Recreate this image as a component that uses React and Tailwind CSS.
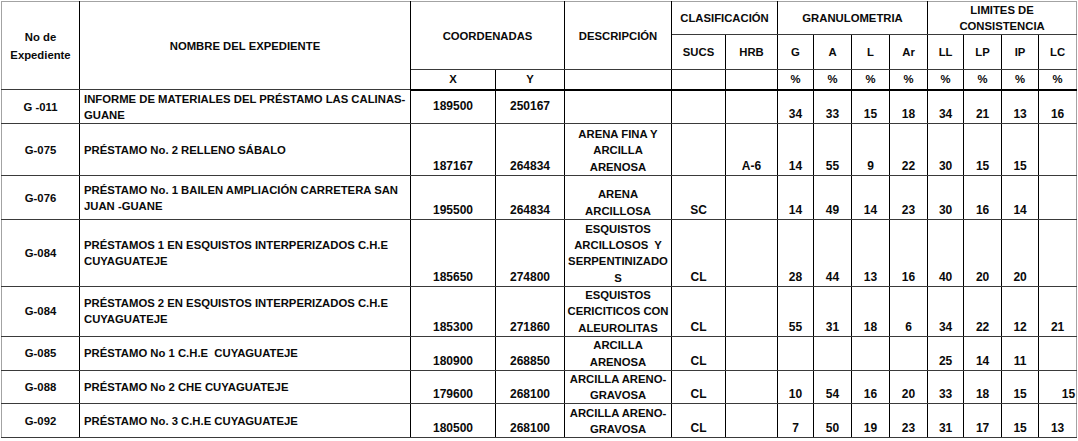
const rows = [
  {
    id: 'G -011',
    name: ['INFORME DE MATERIALES DEL PRÉSTAMO LAS CALINAS-', 'GUANE'],
    x: '189500', y: '250167', coordMid: true,
    desc: [], sucs: '', hrb: '',
    vals: ['34', '33', '15', '18', '34', '21', '13', '16'],
    h: 'h-[34px]',
  },
  {
    id: 'G-075',
    name: ['PRÉSTAMO No. 2 RELLENO SÁBALO'],
    x: '187167', y: '264834',
    desc: ['ARENA FINA Y', 'ARCILLA', 'ARENOSA'], sucs: '', hrb: 'A-6',
    vals: ['14', '55', '9', '22', '30', '15', '15', ''],
    h: 'h-[52px]',
  },
  {
    id: 'G-076',
    name: ['PRÉSTAMO No. 1 BAILEN AMPLIACIÓN CARRETERA SAN', 'JUAN -GUANE'],
    x: '195500', y: '264834',
    desc: ['ARENA', 'ARCILLOSA'], sucs: 'SC', hrb: '',
    vals: ['14', '49', '14', '23', '30', '16', '14', ''],
    h: 'h-[44px]',
  },
  {
    id: 'G-084',
    name: ['PRÉSTAMOS 1 EN ESQUISTOS INTERPERIZADOS C.H.E', 'CUYAGUATEJE'],
    x: '185650', y: '274800',
    desc: ['ESQUISTOS', 'ARCILLOSOS  Y', 'SERPENTINIZADO', 'S'], sucs: 'CL', hrb: '',
    vals: ['28', '44', '13', '16', '40', '20', '20', ''],
    h: 'h-[67px]',
  },
  {
    id: 'G-084',
    name: ['PRÉSTAMOS 2 EN ESQUISTOS INTERPERIZADOS C.H.E', 'CUYAGUATEJE'],
    x: '185300', y: '271860',
    desc: ['ESQUISTOS', 'CERICITICOS CON', 'ALEUROLITAS'], sucs: 'CL', hrb: '',
    vals: ['55', '31', '18', '6', '34', '22', '12', '21'],
    h: 'h-[49px]',
  },
  {
    id: 'G-085',
    name: ['PRÉSTAMO No 1 C.H.E  CUYAGUATEJE'],
    x: '180900', y: '268850',
    desc: ['ARCILLA', 'ARENOSA'], sucs: 'CL', hrb: '',
    vals: ['', '', '', '', '25', '14', '11', ''],
    h: 'h-[34px]',
  },
  {
    id: 'G-088',
    name: ['PRÉSTAMO No 2 CHE CUYAGUATEJE'],
    x: '179600', y: '268100',
    desc: ['ARCILLA ARENO-', 'GRAVOSA'], sucs: 'CL', hrb: '',
    vals: ['10', '54', '16', '20', '33', '18', '15', '15'], lcRight: true,
    h: 'h-[33px]',
  },
  {
    id: 'G-092',
    name: ['PRÉSTAMO No. 3 C.H.E CUYAGUATEJE'],
    x: '180500', y: '268100',
    desc: ['ARCILLA ARENO-', 'GRAVOSA'], sucs: 'CL', hrb: '',
    vals: ['7', '50', '19', '23', '31', '17', '15', '13'],
    h: 'h-[34px]',
  },
];

const widths = [
  'w-[78px]', 'w-[331px]', 'w-[85px]', 'w-[69px]', 'w-[107px]', 'w-[54px]', 'w-[52px]',
  'w-[36px]', 'w-[38px]', 'w-[38px]', 'w-[38px]', 'w-[36px]', 'w-[38px]', 'w-[37px]', 'w-[38px]',
];

// cell borders: black verticals, dark horizontals
const cell = 'border border-x-black border-y-[#3a3a3a] p-0';
const num = 'text-[12px] leading-[17px]';

function Lines({ lines }) {
  return lines.map((l, i) => (
    <span key={i} className="block whitespace-pre">{l}</span>
  ));
}

export default function App() {
  return (
    <div className="bg-white w-[1078px] h-[441px] pl-[1px] pt-[1px] font-['Liberation_Sans',Arial,sans-serif] font-bold text-[11.3px] text-[#0a0a0a]">
      <table className="table-fixed border-collapse w-[1075px]">
        <colgroup>
          {widths.map((w, i) => <col key={i} className={w} />)}
        </colgroup>
        <thead className="leading-[16px]">
          <tr className="h-[32px]">
            <th rowSpan={3} className={`${cell} border-l-[#a3a3a3] border-t-[#a3a3a3] font-bold leading-[18px] text-center align-middle`}>
              No de<br />Expediente
            </th>
            <th rowSpan={3} className={`${cell} border-t-[#a3a3a3] font-bold text-center align-middle`}>
              NOMBRE DEL EXPEDIENTE
            </th>
            <th colSpan={2} rowSpan={2} className={`${cell} border-t-[#a3a3a3] font-bold text-center align-middle`}>
              COORDENADAS
            </th>
            <th rowSpan={2} className={`${cell} border-t-[#a3a3a3] font-bold text-center align-middle`}>
              DESCRIPCIÓN
            </th>
            <th colSpan={2} className={`${cell} border-t-[#a3a3a3] font-bold text-center align-middle`}>
              CLASIFICACIÓN
            </th>
            <th colSpan={4} className={`${cell} border-t-[#a3a3a3] font-bold text-center align-middle`}>
              GRANULOMETRIA
            </th>
            <th colSpan={4} className={`${cell} border-t-[#a3a3a3] border-r-[#a3a3a3] font-bold text-center align-middle leading-[16px]`}>
              LIMITES DE<br />CONSISTENCIA
            </th>
          </tr>
          <tr className="h-[35px]">
            {['SUCS', 'HRB', 'G', 'A', 'L', 'Ar', 'LL', 'LP', 'IP'].map((t) => (
              <th key={t} className={`${cell} font-bold text-center align-middle`}>{t}</th>
            ))}
            <th className={`${cell} border-r-[#a3a3a3] font-bold text-center align-middle`}>LC</th>
          </tr>
          <tr className="h-[20px]">
            <th className={`${cell} border-b-2 border-b-black font-bold text-center align-middle`}>X</th>
            <th className={`${cell} border-b-2 border-b-black font-bold text-center align-middle`}>Y</th>
            <th className={`${cell} border-b-2 border-b-black`}></th>
            <th className={`${cell} border-b-2 border-b-black`}></th>
            <th className={`${cell} border-b-2 border-b-black`}></th>
            {[0, 1, 2, 3, 4, 5, 6].map((i) => (
              <th key={i} className={`${cell} border-b-2 border-b-black font-bold text-center align-middle`}>%</th>
            ))}
            <th className={`${cell} border-b-2 border-b-black border-r-[#a3a3a3] font-bold text-center align-middle`}>%</th>
          </tr>
        </thead>
        <tbody className="leading-[16px]">
          {rows.map((r, ri) => (
            <tr key={ri} className={r.h}>
              <td className={`${cell} border-l-[#a3a3a3] text-center align-middle`}>{r.id}</td>
              <td className={`${cell} pl-[4px] text-left align-middle`}>
                <Lines lines={r.name} />
              </td>
              <td className={`${cell} ${num} text-center ${r.coordMid ? 'align-middle' : 'align-bottom'}`}>{r.x}</td>
              <td className={`${cell} ${num} text-center ${r.coordMid ? 'align-middle' : 'align-bottom'}`}>{r.y}</td>
              <td className={`${cell} text-center align-bottom leading-[16.3px]`}>
                <Lines lines={r.desc} />
              </td>
              <td className={`${cell} ${num} text-center align-bottom`}>{r.sucs}</td>
              <td className={`${cell} ${num} text-center align-bottom`}>{r.hrb}</td>
              {r.vals.slice(0, 7).map((v, vi) => (
                <td key={vi} className={`${cell} ${num} text-center align-bottom`}>{v}</td>
              ))}
              <td className={`${cell} ${num} border-r-[#a3a3a3] align-bottom ${r.lcRight ? 'text-right pr-[1px]' : 'text-center'}`}>
                {r.vals[7]}
              </td>
            </tr>
          ))}
        </tbody>
      </table>
    </div>
  );
}
